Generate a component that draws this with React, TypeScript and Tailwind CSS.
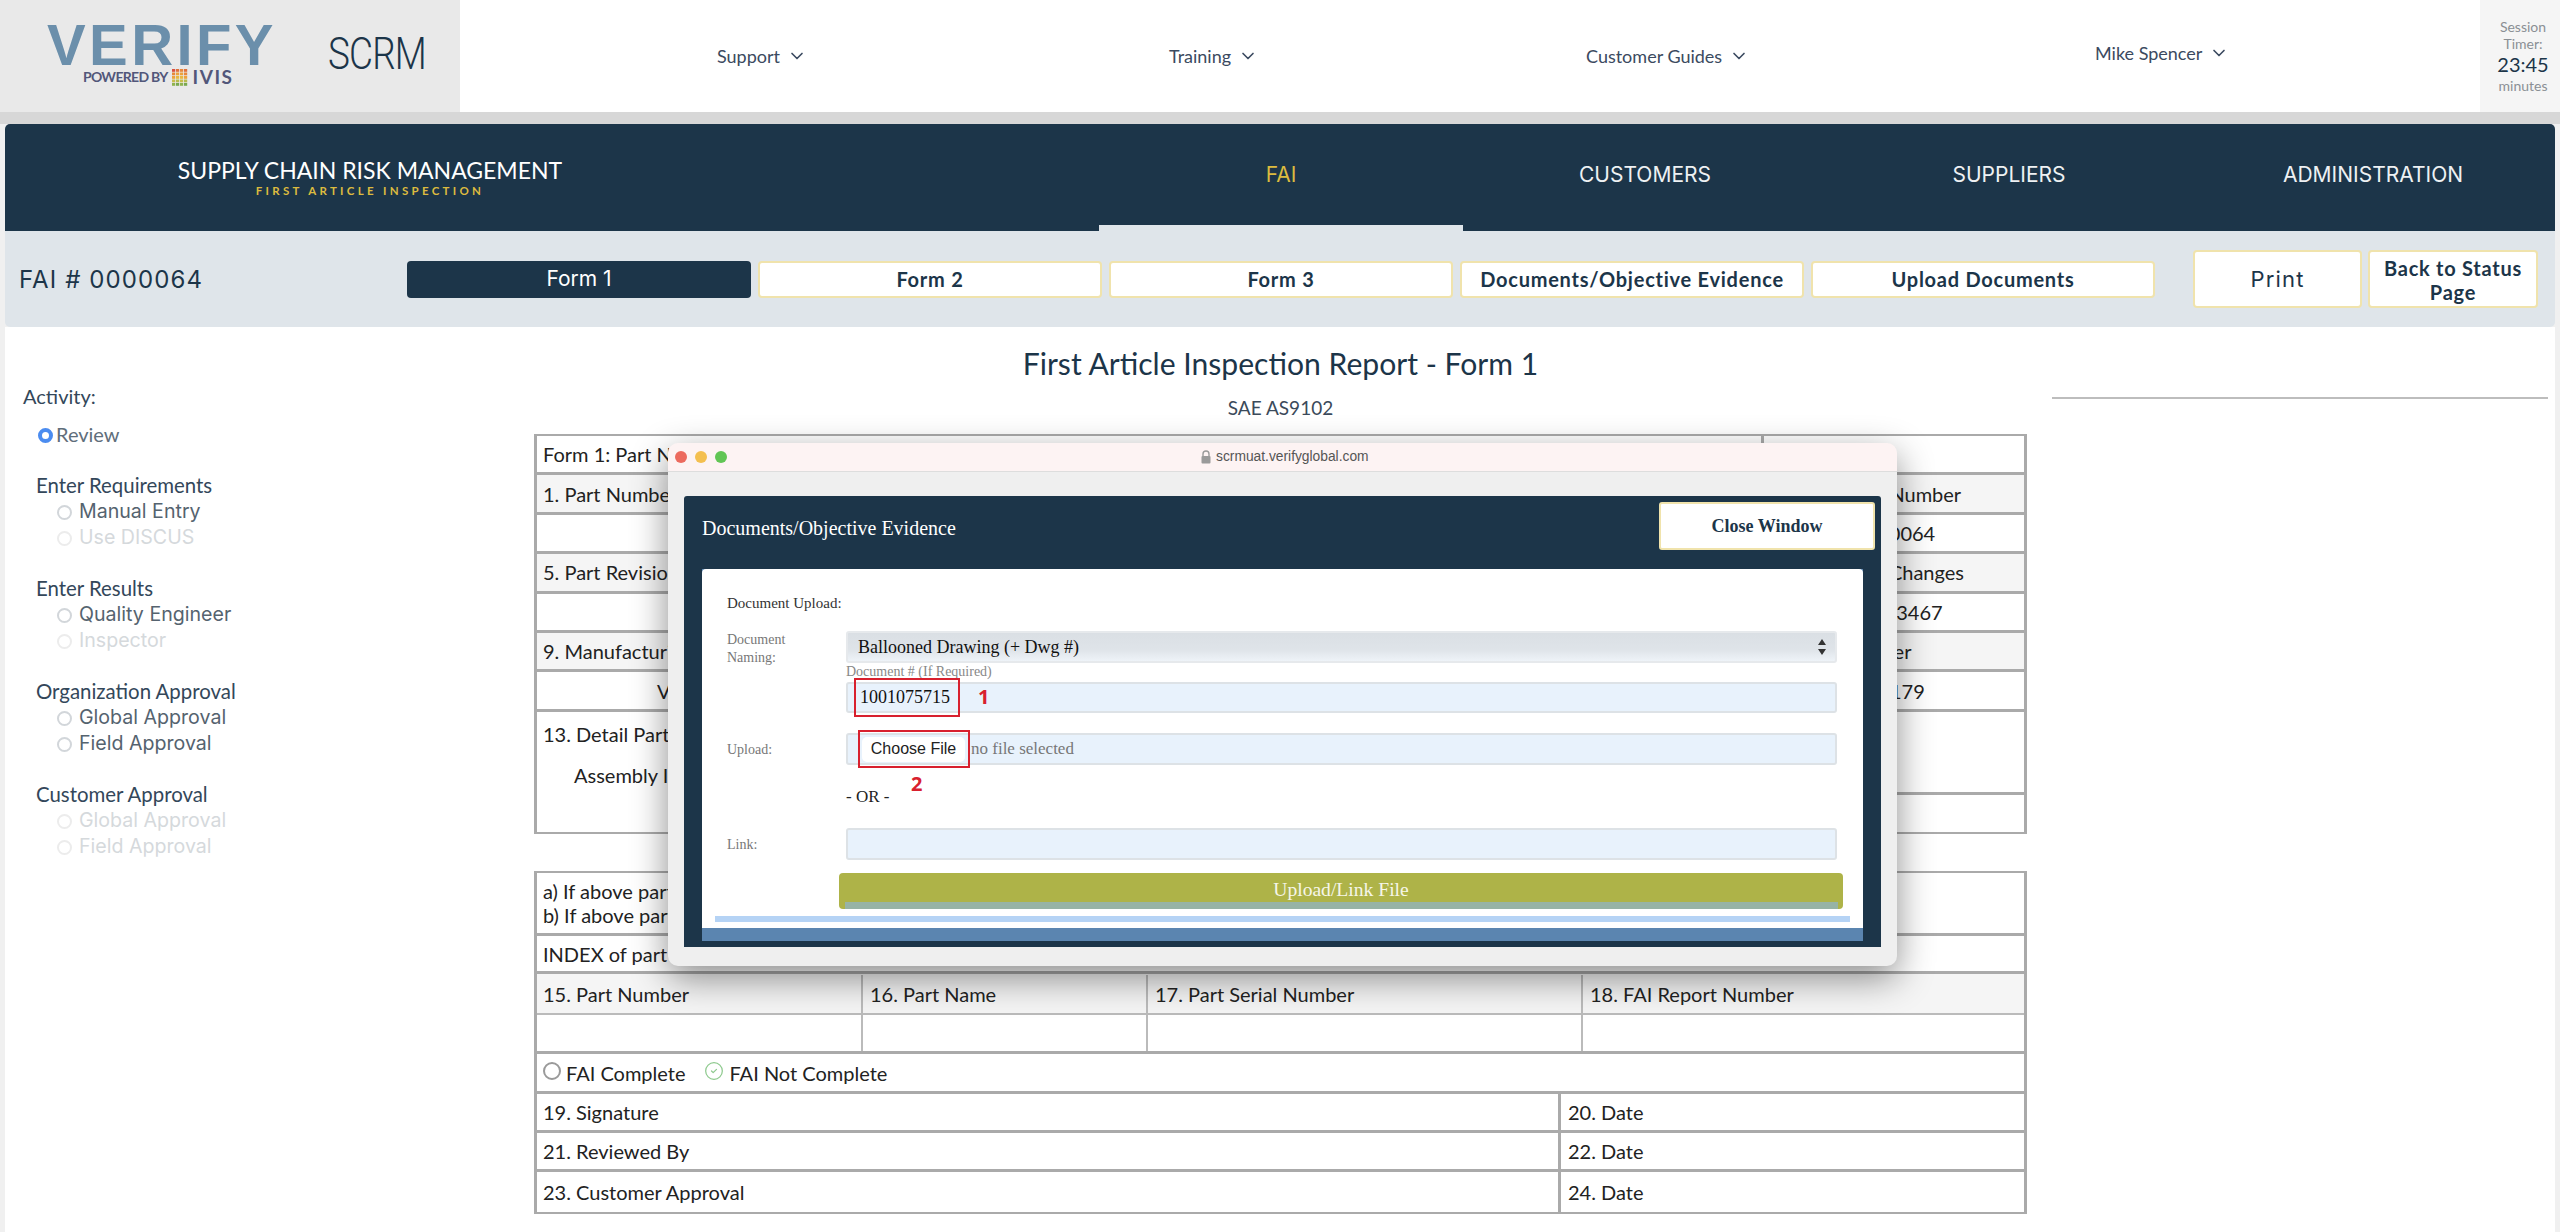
import { ChevronDown, CircleCheck } from "lucide-react";

const navy = "#1c3549";

function Chev({ label, className }: { label: string; className: string }) {
  return (
    <div className={`flex items-center gap-[7px] text-[18px] text-[#3b4a60] ${className}`}>
      <span>{label}</span>
      <ChevronDown className="w-[20px] h-[20px]" strokeWidth={2} />
    </div>
  );
}

function Radio({ dim }: { dim?: boolean }) {
  return (
    <span className={`inline-block w-[15px] h-[15px] rounded-full border-2 shrink-0 ${dim ? "border-[#ececec]" : "border-[#d2d6da]"}`} />
  );
}

function Item({ label, dim }: { label: string; dim?: boolean }) {
  return (
    <div className="h-[26px] flex items-center pl-[21px] gap-[7px]">
      <Radio dim={dim} />
      <span className={`font-['Inter'] text-[19.6px] ${dim ? "text-[#d5d9dc]" : "text-[#55636f]"}`}>{label}</span>
    </div>
  );
}

function Group({ title, items, mb }: { title: string; items: [string, boolean?][]; mb?: string }) {
  return (
    <div className={`pl-[31px] ${mb ?? "mb-[24px]"}`}>
      <div className="h-[27px] flex items-center text-[20.4px] text-[#33475a]">{title}</div>
      {items.map(([l, d]) => (
        <Item key={l} label={l} dim={d} />
      ))}
    </div>
  );
}

function Tab({ label, active }: { label: string; active?: boolean }) {
  return (
    <div className={`w-[364px] h-full flex items-center justify-center border-b-[6px] pt-[1px] font-['Inter'] text-[21px] ${active ? "border-[#dfe5ea] text-[#dcbb3f]" : "border-transparent text-[#eef1f3]"}`}>
      {label}
    </div>
  );
}

function FormBtn({ label }: { label: string }) {
  return (
    <div className="w-[344px] h-[37px] flex items-center justify-center bg-white border-2 border-[#f0e3ac] rounded-[4px] text-[20px] font-bold tracking-[0.75px] text-[#1c3549]">
      {label}
    </div>
  );
}

function Row({ text, right, gray, pl, rpl }: { text: string; right?: string; gray?: boolean; pl?: string; rpl?: string }) {
  return (
    <div className={`h-[39.4px] flex border-b-[3px] border-[#aaaaaa] ${gray ? "bg-[#f5f5f5]" : "bg-white"}`}>
      <div className={`w-[1227px] flex items-center border-r-[3px] border-[#aaaaaa] whitespace-nowrap ${pl ?? "pl-[6px]"}`}>{text}</div>
      <div className={`flex-1 flex items-center whitespace-nowrap ${rpl ?? ""}`}>{right}</div>
    </div>
  );
}

function Field({ children, className }: { children?: React.ReactNode; className?: string }) {
  return (
    <div className={`relative border-2 border-[#dde2e6] rounded-[3px] bg-[#e8f2fc] flex items-center ${className ?? "h-[32px]"}`}>
      {children}
    </div>
  );
}

function Logo() {
  const colors = [
    ["#d9503f", "#e0703a", "#e8883a", "#e0703a"],
    ["#e8883a", "#eda23c", "#eda23c", "#e8883a"],
    ["#eda23c", "#e8b840", "#e8b840", "#eda23c"],
    ["#c9bd4a", "#b8bb4c", "#c9bd4a", "#b8bb4c"],
    ["#8fb34f", "#7aa850", "#8fb34f", "#7aa850"],
  ];
  return (
    <svg width="16" height="17" viewBox="0 0 16 17" className="ml-[4px]">
      {colors.map((r, y) =>
        r.map((c, x) => <rect key={`${x}-${y}`} x={x * 4} y={y * 3.5} width="3.2" height="2.8" fill={c} />),
      )}
    </svg>
  );
}

export default function App() {
  return (
    <div className="relative w-[2560px] h-[1232px] overflow-hidden bg-[#f0f0f0] font-['Lato','Liberation_Sans',sans-serif] text-[#222]">
      {/* top header */}
      <header className="h-[112px] bg-white flex">
        <div className="w-[460px] bg-[#e9e9e9] flex items-start pl-[47px]">
          <div className="w-[281px] flex flex-col pt-[24px]">
            <div className="h-[42px] font-['Liberation_Sans'] font-bold text-[58px] leading-[42px] text-[#6b8fab] tracking-[3.4px]">VERIFY</div>
            <div className="flex items-center pl-[36px] h-[20px] mt-[1px]">
              <span className="font-bold text-[14px] leading-[20px] tracking-[-0.7px] text-[#52577a]">POWERED BY</span>
              <Logo />
              <span className="ml-[5px] font-bold text-[19px] leading-[20px] tracking-[1.5px] text-[#52577a]">IVIS</span>
            </div>
          </div>
          <div className="mt-[26px] font-['Roboto'] font-light text-[45px] leading-[56px] tracking-[-1px] text-[#1c3549] scale-x-[0.82] origin-left">SCRM</div>
        </div>
        <div className="flex-1 flex items-center pl-[257px]">
          <Chev label="Support" className="w-[452px]" />
          <Chev label="Training" className="w-[417px]" />
          <Chev label="Customer Guides" className="w-[509px]" />
          <Chev label="Mike Spencer" className="mb-[6px]" />
        </div>
        <div className="w-[80px] bg-[#f5f5f5] flex flex-col items-center pl-[6px] pt-[18px] text-[14px] leading-[17px] text-[#8a8f94]">
          <span>Session</span>
          <span>Timer:</span>
          <span className="text-[20px] leading-[24px] text-[#1c3549]">23:45</span>
          <span className="mt-[1px]">minutes</span>
        </div>
      </header>
      <div className="h-[12px] bg-[#d7d7d7]" />

      <div className="mx-[5px]">
        {/* navy bar */}
        <div className="h-[107px] rounded-t-[5px] flex items-center" style={{ background: navy }}>
          <div className="w-[730px] flex flex-col items-center pb-[2px]">
            <div className="text-[23px] leading-[28px] text-white">SUPPLY CHAIN RISK MANAGEMENT</div>
            <div className="text-[11.5px] leading-[13px] font-bold tracking-[3.3px] text-[#dcbb3f]">FIRST ARTICLE INSPECTION</div>
          </div>
          <div className="ml-[364px] h-full flex">
            <Tab label="FAI" active />
            <Tab label="CUSTOMERS" />
            <Tab label="SUPPLIERS" />
            <Tab label="ADMINISTRATION" />
          </div>
        </div>

        {/* sub bar */}
        <div className="h-[96px] bg-[#dfe5ea] rounded-b-[5px] flex items-center">
          <div className="w-[402px] pl-[14px] pt-[1px] font-['Inter'] text-[24px] tracking-[1.1px] text-[#1c3549]">FAI # 0000064</div>
          <div className="flex gap-[7px]">
            <div className="w-[344px] h-[37px] flex items-center justify-center rounded-[4px] font-['Inter'] text-[21px] text-white bg-[#1c3549]">Form 1</div>
            <FormBtn label="Form 2" />
            <FormBtn label="Form 3" />
            <FormBtn label="Documents/Objective Evidence" />
            <FormBtn label="Upload Documents" />
          </div>
          <div className="ml-[38px] flex gap-[6px]">
            <div className="w-[169px] h-[58px] flex items-center justify-center pt-[1px] bg-white border-2 border-[#f0e3ac] rounded-[4px] font-['Inter'] text-[22px] tracking-[1.2px] text-[#1c3549]">Print</div>
            <div className="w-[170px] h-[58px] flex items-center justify-center pt-[2px] text-center bg-white border-2 border-[#f0e3ac] rounded-[4px] text-[20px] leading-[24px] font-bold tracking-[0.75px] text-[#1c3549]">Back to Status<br />Page</div>
          </div>
        </div>

        {/* main */}
        <div className="h-[905px] bg-white flex">
          <aside className="w-[529px] pt-[56px]">
            <div className="pl-[18px] h-[26px] flex items-center text-[20px] text-[#33475a]">Activity:</div>
            <div className="mt-[12px] mb-[25px] pl-[33px] h-[26px] flex items-center gap-[3px]">
              <span className="w-[15px] h-[15px] rounded-full border-[4px] border-[#4b8cf0] bg-white shrink-0 mt-[3px]" />
              <span className="text-[20px] text-[#5f6e7b]">Review</span>
            </div>
            <Group title="Enter Requirements" items={[["Manual Entry"], ["Use DISCUS", true]]} />
            <Group title="Enter Results" items={[["Quality Engineer"], ["Inspector", true]]} />
            <Group title="Organization Approval" items={[["Global Approval"], ["Field Approval"]]} />
            <Group title="Customer Approval" items={[["Global Approval", true], ["Field Approval", true]]} mb="mb-0" />
          </aside>

          <section className="w-[1493px] text-[20px]">
            <h1 className="mt-[17px] h-[40px] flex items-center justify-center text-[30.1px] text-[#1c3549]">First Article Inspection Report - Form 1</h1>
            <div className="mt-[12px] h-[24px] flex items-center justify-center text-[19px] text-[#3b4a5a]">SAE AS9102</div>

            <div className="mt-[14px] border-x-[3px] border-t-[2px] border-b-[2px] border-[#aaaaaa]">
              <Row text="Form 1: Part Number" />
              <Row gray text="1. Part Number" right="4. FAI Report Number" rpl="pl-[5px]" />
              <Row text="" right="0000064" rpl="pl-[90px]" />
              <Row gray text="5. Part Revision" right="8. Additional Changes" rpl="pl-[9px]" />
              <Row text="" right="123467" rpl="pl-[109px]" />
              <Row gray text="9. Manufacturing" right="12. P.O. Number" rpl="pl-[3px]" />
              <Row text="V" pl="pl-[120px]" right="179" rpl="pl-[126px]" />
              <div className="h-[120px] flex">
                <div className="flex-1 pl-[6px] pt-[7px]">
                  <div>13. Detail Part</div>
                  <div className="mt-[11px] pl-[31px]">Assembly I</div>
                </div>
                <div className="w-[260px] flex flex-col">
                  <div className="h-[83px] border-b-[3px] border-[#aaaaaa]" />
                </div>
              </div>
            </div>

            <div className="mt-[37px] border-x-[3px] border-t-[2px] border-b-[2px] border-[#aaaaaa]">
              <div className="h-[63.5px] border-b-[3px] border-[#aaaaaa] pl-[6px] pt-[6px] leading-[24px]">
                <div>a) If above part</div>
                <div>b) If above part</div>
              </div>
              <div className="h-[38px] border-b-[3px] border-[#aaaaaa] pl-[6px] flex items-center">INDEX of part</div>
              <div className="h-[41px] flex bg-[#f5f5f5] border-b-2 border-[#bbbbbb] pt-[1px]">
                <div className="w-[326px] pl-[6px] flex items-center border-r-2 border-[#bbbbbb]">15. Part Number</div>
                <div className="w-[285px] pl-[7px] flex items-center border-r-2 border-[#bbbbbb]">16. Part Name</div>
                <div className="w-[435px] pl-[7px] flex items-center border-r-2 border-[#bbbbbb]">17. Part Serial Number</div>
                <div className="flex-1 pl-[7px] flex items-center">18. FAI Report Number</div>
              </div>
              <div className="h-[39px] flex border-b-[3px] border-[#aaaaaa]">
                <div className="w-[326px] border-r-2 border-[#bbbbbb]" />
                <div className="w-[285px] border-r-2 border-[#bbbbbb]" />
                <div className="w-[435px] border-r-2 border-[#bbbbbb]" />
              </div>
              <div className="h-[39.4px] flex items-center border-b-[3px] border-[#aaaaaa] pl-[6px] pt-[2px]">
                <span className="w-[18px] h-[18px] rounded-full border-2 border-[#9a9a9a] mr-[5px] mb-[4px]" />
                <span>FAI Complete</span>
                <CircleCheck className="w-[20px] h-[20px] ml-[19px] mr-[5px] mb-[5px] text-[#8fca8f]" strokeWidth={1.5} />
                <span>FAI Not Complete</span>
              </div>
              {[
                ["19. Signature", "20. Date"],
                ["21. Reviewed By", "22. Date"],
                ["23. Customer Approval", "24. Date"],
              ].map(([a, b], i) => (
                <div key={a} className={`h-[39.4px] flex ${i < 2 ? "border-b-[3px] border-[#aaaaaa]" : ""}`}>
                  <div className="w-[1024px] pl-[6px] flex items-center border-r-[3px] border-[#aaaaaa]">{a}</div>
                  <div className="flex-1 pl-[7px] flex items-center">{b}</div>
                </div>
              ))}
            </div>
          </section>

          <div className="ml-[25px] w-[496px] mt-[70px] h-[2px] bg-[#bdbdbd]" />
        </div>
      </div>

      {/* modal window */}
      <div className="absolute left-[668px] top-[443px] w-[1229px] h-[523px] rounded-[10px] overflow-hidden bg-[#efefef] shadow-[0_12px_36px_rgba(0,0,0,0.45)]">
        <div className="h-[29px] bg-[#fdf3f3] border-b border-[#dddddd] flex items-center pl-[7px]">
          <span className="w-[12px] h-[12px] rounded-full bg-[#ec6a5e]" />
          <span className="ml-[8px] w-[12px] h-[12px] rounded-full bg-[#f4bf4f]" />
          <span className="ml-[8px] w-[12px] h-[12px] rounded-full bg-[#61c554]" />
          <svg width="10" height="14" viewBox="0 0 10 14" className="ml-[474px]">
            <path d="M2 6V4a3 3 0 0 1 6 0v2" fill="none" stroke="#9a9a9a" strokeWidth="1.4" />
            <rect x="0.5" y="6" width="9" height="7.5" rx="1" fill="#9a9a9a" />
          </svg>
          <span className="ml-[5px] font-['Liberation_Sans'] text-[13.8px] text-[#555]">scrmuat.verifyglobal.com</span>
        </div>
        <div className="mt-[24px] mx-[16px] h-[451px] bg-[#1c3549] rounded-t-[3px] font-['Liberation_Serif']">
          <div className="h-[73px] flex items-start justify-between pl-[18px] pr-[6px]">
            <span className="mt-[17px] text-[20px] text-white">Documents/Objective Evidence</span>
            <div className="mt-[6px] w-[216px] h-[48px] flex items-center justify-center bg-white border-2 border-[#f0e3ac] rounded-[3px] font-bold text-[18px] text-[#1c3549]">Close Window</div>
          </div>
          <div className="mx-[18px] bg-[#5b85b0]">
            <div className="h-[359px] bg-white rounded-t-[4px] pt-[24px]">
              <div className="pl-[25px] h-[20px] flex items-center text-[15px] text-[#333]">Document Upload:</div>

              <div className="mt-[18px] flex">
                <div className="w-[144px] pl-[25px] text-[14px] leading-[18px] text-[#777]">Document<br />Naming:</div>
                <div className="w-[991px]">
                  <div className="relative h-[32px] rounded-[3px] border-2 border-[#e6e9ec] bg-[linear-gradient(180deg,#dadfe4,#dfe4e9_60%,#eef3f8)] flex items-center pl-[10px] text-[18px] text-[#111]">
                    Ballooned Drawing (+ Dwg #)
                    <svg width="10" height="18" viewBox="0 0 10 18" className="absolute right-[8px] top-[5px]">
                      <path d="M5 1 9 7H1zM5 17 1 11h8z" fill="#333" />
                    </svg>
                  </div>
                  <div className="mt-[1px] h-[18px] text-[14px] leading-[16px] text-[#888]">Document # (If Required)</div>
                  <Field className="h-[31px]">
                    <span className="pl-[12px] text-[18px] text-[#111]">1001075715</span>
                    <span className="absolute left-[6px] top-[-6px] w-[106px] h-[39px] border-2 border-[#d8202e]" />
                    <span className="absolute left-[130px] top-[-2px] font-['Open_Sans'] font-bold text-[20px] text-[#d8202e]">1</span>
                  </Field>
                </div>
              </div>

              <div className="mt-[20px] flex items-center">
                <div className="w-[144px] pl-[25px] text-[14px] text-[#777]">Upload:</div>
                <Field className="w-[991px] h-[32px]">
                  <span className="ml-[14px] w-[103px] h-[25px] flex items-center justify-center rounded-[5px] bg-white font-['Liberation_Sans'] text-[16px] text-[#222]">Choose File</span>
                  <span className="ml-[6px] text-[17px] text-[#777]">no file selected</span>
                  <span className="absolute left-[10px] top-[-5px] w-[112px] h-[38px] border-2 border-[#d8202e]" />
                </Field>
              </div>

              <div className="relative ml-[144px] mt-[21px] h-[22px] flex items-center text-[17px] text-[#222]">
                - OR -
                <span className="absolute left-[65px] top-[-17px] font-['Open_Sans'] font-bold text-[20px] text-[#d8202e]">2</span>
              </div>

              <div className="mt-[20px] flex items-center">
                <div className="w-[144px] pl-[25px] text-[14px] text-[#777]">Link:</div>
                <Field className="w-[991px] h-[32px]" />
              </div>

              <div className="ml-[137px] mt-[13px] w-[1004px] h-[36px] rounded-[4px] bg-[#aeb348] relative flex items-center justify-center pb-[2px] text-[19.6px] text-[#f6f6e8] overflow-hidden">
                Upload/Link File
                <span className="absolute left-[6px] right-[5px] bottom-0 h-[7px] bg-[#97b3a5]" />
              </div>
              <div className="ml-[13px] mt-[7px] w-[1135px] h-[6px] bg-[#b5d3f5]" />
            </div>
            <div className="h-[13px]" />
          </div>
        </div>
      </div>
    </div>
  );
}
